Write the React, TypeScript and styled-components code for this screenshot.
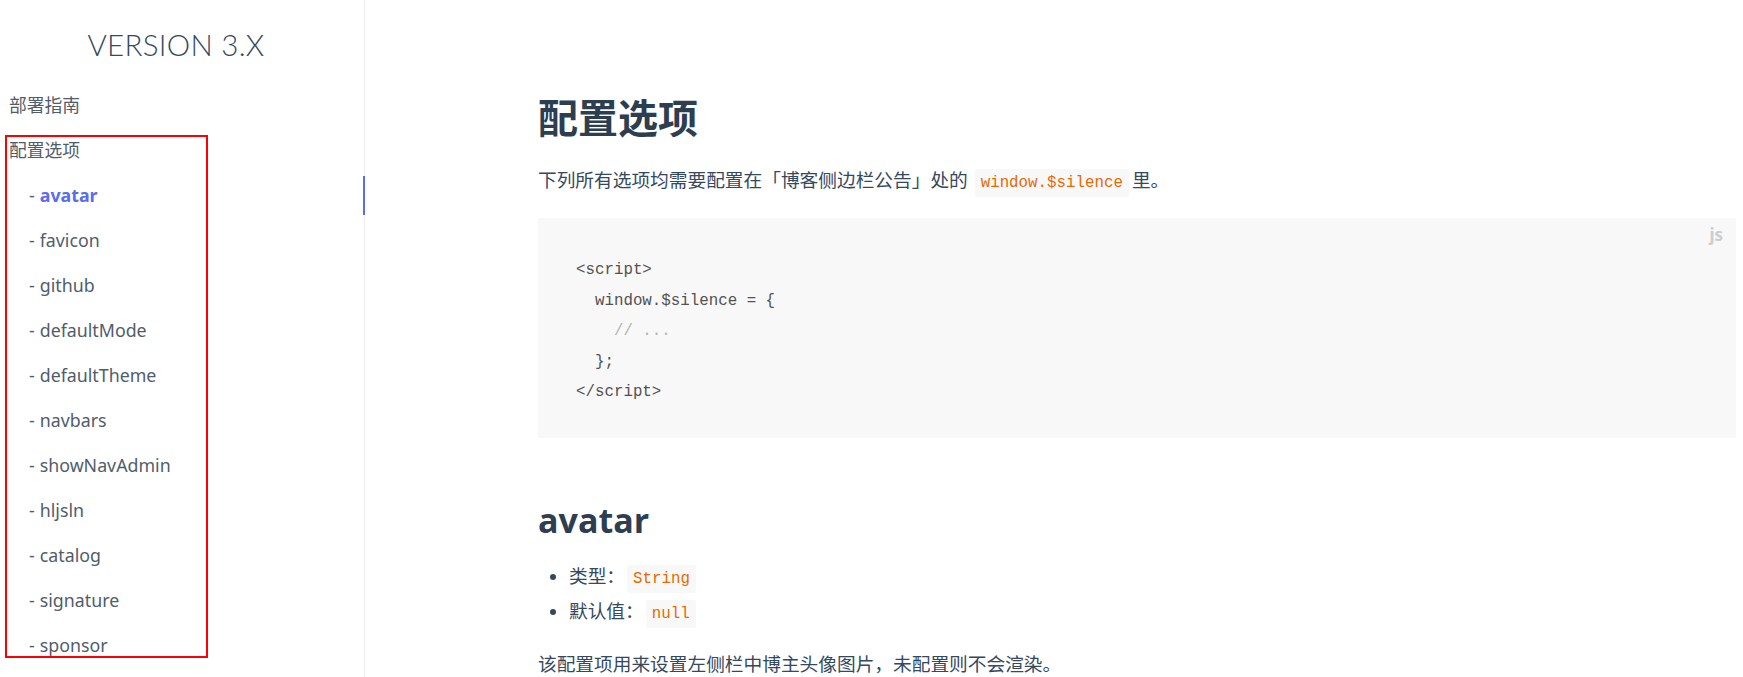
import React from 'react';
import styled, { createGlobalStyle } from 'styled-components';

const GlobalStyle = createGlobalStyle`
  html, body {
    margin: 0;
    padding: 0;
    background: #fff;
  }
  body {
    font-family: "Noto Sans", "Noto Sans CJK SC", sans-serif;
    -webkit-font-smoothing: antialiased;
  }
`;

const THEME = '#5a6cf0';
const CJK = '"Noto Sans", "Noto Sans CJK SC", sans-serif';
const MONO = '"Liberation Mono", "DejaVu Sans Mono", monospace';

const Page = styled.div`
  display: flex;
  width: 1743px;
  height: 677px;
  overflow: hidden;
`;

const Sidebar = styled.aside`
  position: relative;
  flex: 0 0 365px;
  border-right: 1px solid #eeeeee;
  padding-top: 20px;
  box-sizing: border-box;
`;

const AppName = styled.h1`
  margin: 0;
  padding-right: 12px;
  text-align: center;
  font-family: "Lato", "Noto Sans", sans-serif;
  font-weight: 300;
  font-size: 29.5px;
  line-height: 50px;
  letter-spacing: 0.3px;
  color: #34495e;
`;

const NavList = styled.ul`
  list-style: none;
  margin: 13px 0 0;
  padding: 0;
`;

const NavItem = styled.li<{ $sub?: boolean; $active?: boolean }>`
  padding: 3px 0;
  a {
    display: block;
    height: 39px;
    line-height: 39px;
    padding-left: ${({ $sub }) => ($sub ? '29px' : '9px')};
    font-family: ${CJK};
    font-size: 17.8px;
    text-decoration: none;
    white-space: nowrap;
    color: ${({ $active }) => ($active ? THEME : '#505d6b')};
    font-weight: ${({ $active }) => ($active ? 700 : 400)};
    border-right: 2px solid ${({ $active }) => ($active ? THEME : 'transparent')};
    margin-right: -1px;
  }
`;

const Dash = styled.span`
  color: #505d6b;
  font-weight: 400;
  margin-right: 5px;
`;

/* annotation rectangle drawn over the sidebar */
const Highlight = styled.div`
  position: absolute;
  left: 5px;
  top: 135px;
  width: 203px;
  height: 523px;
  border: 2px solid #ff0000;
  box-sizing: border-box;
  pointer-events: none;
`;

const Main = styled.main`
  flex: 1;
  padding: 92px 0 0 173px;
  box-sizing: border-box;
`;

const Section = styled.article`
  width: 1198px;
  color: #34495e;
  font-family: ${CJK};
`;

const Title = styled.h1`
  margin: 0;
  font-family: "Noto Sans CJK SC", sans-serif;
  font-size: 40px;
  line-height: 48px;
  font-weight: 700;
  color: #2c3e50;
`;

const Para = styled.p<{ $top: number }>`
  margin: ${({ $top }) => $top}px 0 0;
  font-size: 18.7px;
  line-height: 28px;
  color: #34495e;
`;

const InlineCode = styled.code`
  font-family: ${MONO};
  font-size: 15.8px;
  color: #e96900;
  background: #f8f8f8;
  border-radius: 2px;
  padding: 5px 6px;
  margin: 0 3px 0 2px;
`;

const CodeBlock = styled.pre`
  position: relative;
  margin: 21px 0 0;
  background: #f8f8f8;
  padding: 37px 0 30px 38px;
  font-family: ${MONO};
  font-size: 15.8px;
  line-height: 30.5px;
  color: #525252;
`;

const Lang = styled.span`
  position: absolute;
  top: 8px;
  right: 13px;
  font-family: "Noto Sans", sans-serif;
  font-size: 17px;
  line-height: 1;
  font-weight: 700;
  color: #cccccc;
`;

const Comment = styled.span`
  color: #b3b3b3;
`;

const SubTitle = styled.h2`
  margin: 62px 0 0;
  font-family: "Open Sans", "Noto Sans", sans-serif;
  font-size: 34px;
  line-height: 41px;
  font-weight: 700;
  color: #2c3e50;
`;

const Props = styled.ul`
  margin: 19px 0 0;
  padding-left: 31px;
  font-size: 18.7px;
  line-height: 32px;
  li::marker {
    font-size: 17px;
  }
`;

const sidebar = [
  'avatar',
  'favicon',
  'github',
  'defaultMode',
  'defaultTheme',
  'navbars',
  'showNavAdmin',
  'hljsln',
  'catalog',
  'signature',
  'sponsor',
];

export default function App() {
  return (
    <>
      <GlobalStyle />
      <Page>
        <Sidebar>
          <AppName>VERSION 3.X</AppName>
          <NavList>
            <NavItem>
              <a href="#">部署指南</a>
            </NavItem>
            <NavItem>
              <a href="#">配置选项</a>
            </NavItem>
            {sidebar.map((name, i) => (
              <NavItem key={name} $sub $active={i === 0}>
                <a href="#">
                  <Dash>-</Dash>
                  {name}
                </a>
              </NavItem>
            ))}
          </NavList>
          <Highlight />
        </Sidebar>
        <Main>
          <Section>
            <Title>配置选项</Title>
            <Para $top={26}>
              下列所有选项均需要配置在「博客侧边栏公告」处的 <InlineCode>window.$silence</InlineCode>里。
            </Para>
            <CodeBlock>
              <Lang>js</Lang>
              {'<script>\n  window.$silence = {\n    '}
              <Comment>// ...</Comment>
              {'\n  };\n</script>'}
            </CodeBlock>
            <SubTitle>avatar</SubTitle>
            <Props>
              <li>
                类型：<InlineCode>String</InlineCode>
              </li>
              <li>
                默认值：<InlineCode>null</InlineCode>
              </li>
            </Props>
            <Para $top={20}>该配置项用来设置左侧栏中博主头像图片，未配置则不会渲染。</Para>
          </Section>
        </Main>
      </Page>
    </>
  );
}
